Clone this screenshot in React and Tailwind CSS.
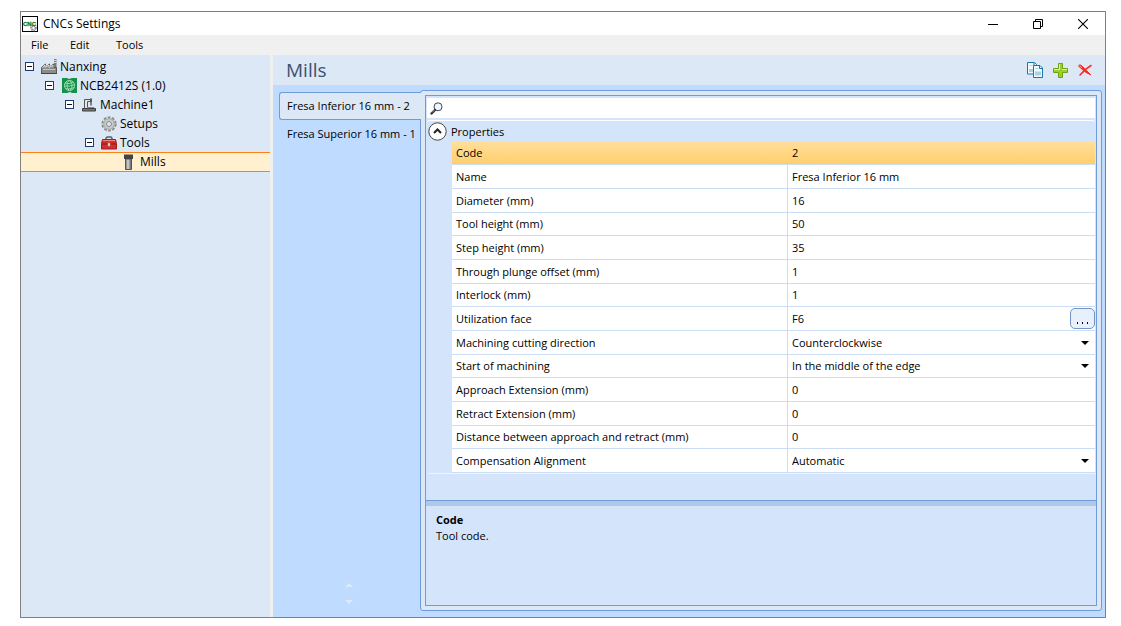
import React, { useState } from "react";

const mills = [
  { id: 2, label: "Fresa Inferior 16 mm - 2" },
  { id: 1, label: "Fresa Superior 16 mm - 1" },
];

const properties = [
  { name: "Code", value: "2", selected: true },
  { name: "Name", value: "Fresa Inferior 16 mm" },
  { name: "Diameter (mm)", value: "16" },
  { name: "Tool height (mm)", value: "50" },
  { name: "Step height (mm)", value: "35" },
  { name: "Through plunge offset (mm)", value: "1" },
  { name: "Interlock (mm)", value: "1" },
  { name: "Utilization face", value: "F6", type: "dialog" },
  { name: "Machining cutting direction", value: "Counterclockwise", type: "select", options: ["Counterclockwise", "Clockwise"] },
  { name: "Start of machining", value: "In the middle of the edge", type: "select", options: ["In the middle of the edge", "At the corner"] },
  { name: "Approach Extension (mm)", value: "0" },
  { name: "Retract Extension (mm)", value: "0" },
  { name: "Distance between approach and retract (mm)", value: "0" },
  { name: "Compensation Alignment", value: "Automatic", type: "select", options: ["Automatic", "Manual"] },
];

function AppIcon() {
  return (
    <svg width="16" height="16" viewBox="0 0 16 16" className="shrink-0">
      <rect x="0.5" y="0.5" width="15" height="15" fill="#fff" stroke="#000" />
      <circle cx="11.5" cy="12" r="2.2" fill="none" stroke="#8c8c8c" strokeWidth="2.2" strokeDasharray="1.3 .6" />
      <text x="1" y="10" fontSize="6" fontWeight="bold" fontFamily="Liberation Sans, sans-serif" fill="#0b7a1e" stroke="#0b7a1e" strokeWidth=".3">CNC</text>
    </svg>
  );
}

function FactoryIcon() {
  return (
    <svg width="16" height="16" viewBox="0 0 16 16" className="shrink-0">
      <path d="M13 0h2.5v9H13z" fill="#777" />
      <path d="M13 1.5h2.5M13 3.5h2.5" stroke="#ddd" />
      <path d="M.5 14.500V8.500L4.500 5v3L8.500 5v3L12.500 5v3.500h3v6z" fill="#8b8b89" stroke="#5c5b59" />
      <path d="M1.500 8.500L4 6v2.500L8 6v2.500L12 6v2.500" fill="none" stroke="#dedede" />
      <path d="M2 10.500h12" stroke="#c4c4c2" />
      <path d="M0 14.500h16" stroke="#464543" />
    </svg>
  );
}

function GlobeIcon() {
  return (
    <svg width="15" height="15" viewBox="0 0 15 15" className="shrink-0">
      <path d="M0 0h5l2 1 3-1h5v15h-5l-2-1-3 1H0z" fill="#13934a" />
      <g fill="none" stroke="#a5dfb5">
        <circle cx="7.500" cy="7.500" r="5" />
        <path d="M3 5Q7 7 11 4M2.500 8Q8 9 12.500 6.500M4 11Q8 11.500 12 9.500M7 2.500Q3 7 7 12.500M7.500 2.500Q12 6 8.500 12.500" strokeWidth=".9" />
      </g>
    </svg>
  );
}

function MachineIcon() {
  return (
    <svg width="14" height="14" viewBox="0 0 14 14" className="shrink-0">
      <path d="M2.500 10.500V1.500H9V3.500H5.500v7z" fill="#e4e4e4" stroke="#555" />
      <path d="M8 .5h2v4H8z" fill="#555" />
      <path d="M8.500 4.500h1v3h-1z" fill="#222" />
      <path d="M5 9.500h7" stroke="#888" />
      <path d="M.5 10.500h13v2.500H.5z" fill="#777" stroke="#3f3f3f" />
    </svg>
  );
}

function GearIcon() {
  return (
    <svg width="16" height="16" viewBox="0 0 16 16" className="shrink-0">
      <circle cx="8" cy="8" r="6.300" fill="none" stroke="#8a8a8a" strokeWidth="2.600" strokeDasharray="2.600 1.360" />
      <circle cx="8" cy="8" r="4.500" fill="none" stroke="#c9c9c9" strokeWidth="3" />
      <circle cx="8" cy="8" r="5.300" fill="none" stroke="#a0a0a0" strokeWidth=".8" />
      <circle cx="8" cy="8" r="2.500" fill="#dde8f5" stroke="#858585" />
    </svg>
  );
}

function ToolboxIcon() {
  return (
    <svg width="16" height="14" viewBox="0 0 16 14" className="shrink-0">
      <path d="M5 4V2.500Q5 1 6.500 1h3Q11 1 11 2.500V4" fill="none" stroke="#5b5b5b" strokeWidth="1.400" />
      <path d="M1.500 3.500h13l1 4v5.500H.5V7.500z" fill="#d62f2a" stroke="#a51b18" />
      <path d="M2 4.500h12" stroke="#f28a82" />
      <path d="M1 8h14" stroke="#8d1412" />
      <path d="M7 7h2v3H7z" fill="#eee" stroke="#999" strokeWidth=".6" />
    </svg>
  );
}

function MillIcon() {
  return (
    <svg width="10" height="16" viewBox="0 0 10 16" className="shrink-0">
      <defs>
        <linearGradient id="shank" x1="0" x2="1">
          <stop offset="0" stopColor="#666" />
          <stop offset=".4" stopColor="#d8d8d8" />
          <stop offset="1" stopColor="#555" />
        </linearGradient>
      </defs>
      <path d="M1.500 5h6v10.500h-6z" fill="url(#shank)" stroke="#555" />
      <path d="M0 .5h9v4.500H0z" fill="#444" />
    </svg>
  );
}

function CopyIcon() {
  return (
    <svg width="16" height="16" viewBox="0 0 16 16">
      <g fill="#f2fafd" stroke="#1877a8">
        <path d="M.5 .5h7l2 2v9.500H.5z" />
        <path d="M6.500 3.500h6.500l2.500 2.500v9.500h-9z" />
      </g>
      <path d="M2 7h4v3H2zM8 9.500h6v4H8z" fill="#a4d4e6" />
      <path d="M2.500 3.500h3M8.500 6.500h3" stroke="#a4d4e6" />
      <path d="M12.500 3.500v3h3M7 1v2.500" fill="none" stroke="#1877a8" />
    </svg>
  );
}

function AddIcon() {
  return (
    <svg width="15" height="15" viewBox="0 0 15 15">
      <path d="M5.500 .5h4v5h5v4h-5v5h-4v-5h-5v-4h5z" fill="#9bd02a" stroke="#6ea01a" />
      <path d="M6.500 1v5.500H1M9 6.500h5" fill="none" stroke="#e0f3a8" />
    </svg>
  );
}

function DeleteIcon() {
  return (
    <svg width="15" height="13" viewBox="0 0 15 13">
      <path d="M.5 2Q1.500 0 3.500 1.500Q8 6 13 11Q7 9 .5 2z" fill="#f5302b" stroke="#f5302b" strokeLinejoin="round" />
      <path d="M13 1.500Q7 5 2 11" fill="none" stroke="#f5302b" strokeWidth="1.600" strokeLinecap="round" />
      <path d="M1.500 1.500L4 4" stroke="#ff9d98" />
    </svg>
  );
}

function SearchIcon() {
  return (
    <svg width="13" height="13" viewBox="0 0 13 13" className="shrink-0">
      <circle cx="8" cy="4.800" r="4" fill="#f1f6fb" stroke="#3c4a5c" />
      <path d="M5 8L1.500 11.500" stroke="#303030" strokeWidth="2.400" strokeLinecap="round" />
      <path d="M4.500 8L2 10.500" stroke="#aaa" strokeWidth=".8" />
    </svg>
  );
}

function Expander() {
  return (
    <svg width="9" height="9" viewBox="0 0 9 9" className="shrink-0">
      <rect x="0.500" y="0.500" width="8" height="8" fill="#fff" stroke="#1f3a6e" />
      <path d="M2 4.500h5" stroke="#111" />
    </svg>
  );
}

const tree = [
  { label: "Nanxing", icon: FactoryIcon, indent: "pl-1", open: true },
  { label: "NCB2412S (1.0)", icon: GlobeIcon, indent: "pl-6", open: true },
  { label: "Machine1", icon: MachineIcon, indent: "pl-11", open: true },
  { label: "Setups", icon: GearIcon, indent: "pl-16" },
  { label: "Tools", icon: ToolboxIcon, indent: "pl-16", open: true },
  { label: "Mills", icon: MillIcon, indent: "pl-[84px]", selected: true },
];

function TreeRow({ node }) {
  const Icon = node.icon;
  return (
    <li className={node.selected ? "border-y border-[#ff7f11] bg-[#fff0d0]" : ""}>
      <button className={`flex w-full items-center text-left ${node.selected ? "h-[18px]" : "h-[19px]"} ${node.indent}`}>
        <span className="flex w-4 shrink-0">{node.open && <Expander />}</span>
        <span className="flex w-4 shrink-0 justify-center">
          <Icon />
        </span>
        <span className="pl-[3px] whitespace-nowrap">{node.label}</span>
      </button>
    </li>
  );
}

function PropertyEditor({ prop }) {
  if (prop.type === "select") {
    return (
      <div className="flex items-center">
        <select aria-label={prop.name} defaultValue={prop.value} className="min-w-0 flex-1 appearance-none bg-transparent pl-1 outline-none">
          {prop.options.map((option) => (
            <option key={option}>{option}</option>
          ))}
        </select>
        <svg width="8" height="4" viewBox="0 0 8 4" className="pointer-events-none mr-[6px] shrink-0">
          <path d="M0 0h8L4 4z" fill="#000" />
        </svg>
      </div>
    );
  }
  return (
    <div className="flex items-center">
      <input aria-label={prop.name} defaultValue={prop.value} className="min-w-0 flex-1 bg-transparent pl-1 outline-none" />
      {prop.type === "dialog" && (
        <button aria-label="Choose face" className="flex h-[21px] w-[25px] items-center justify-center gap-1 rounded-[5px] border border-[#7395c6] bg-[#e8f0fb] pt-2">
          <span className="h-[2px] w-px bg-black"></span>
          <span className="h-[2px] w-px bg-black"></span>
          <span className="h-[2px] w-px bg-black"></span>
        </button>
      )}
    </div>
  );
}

export default function App() {
  const [activeMill, setActiveMill] = useState(2);

  return (
    <div className="flex min-h-screen bg-white pt-[11px] pr-[15px] pb-2 pl-5 font-['Open_Sans','Noto_Sans',sans-serif] text-[12px] leading-4 text-black">
      <div className="flex min-w-0 flex-1 flex-col border border-[#808080]">
        {/* Title bar */}
        <header className="flex h-[23px] items-center pl-px">
          <AppIcon />
          <h1 className="flex-1 pl-[5px]">CNCs Settings</h1>
          <div className="flex items-center">
            <button aria-label="Minimize" className="flex w-[45px] justify-center">
              <svg width="10" height="10" viewBox="0 0 10 10"><path d="M0 5.500h10" stroke="#000" /></svg>
            </button>
            <button aria-label="Restore" className="flex w-[45px] justify-center">
              <svg width="10" height="10" viewBox="0 0 10 10" fill="none" stroke="#000">
                <path d="M.5 2.500h7v7h-7zM2.500 2.500v-2h7v7h-2" />
              </svg>
            </button>
            <button aria-label="Close" className="flex w-[45px] justify-center">
              <svg width="10" height="10" viewBox="0 0 10 10"><path d="M0 0l10 10M10 0L0 10" stroke="#000" strokeWidth="1.100" /></svg>
            </button>
          </div>
        </header>

        <nav className="flex h-5 items-center bg-[#f0f0f0] text-[11px]">
          <button className="w-[39px] pl-[10px] text-left">File</button>
          <button className="w-[46px] pl-[10px] text-left">Edit</button>
          <button className="pl-[10px] text-left">Tools</button>
        </nav>

        <div className="flex flex-1">
          {/* Machine tree */}
          <aside className="w-[249px] shrink-0 bg-[#dce8f6] pt-[2px]">
            <ul>
              {tree.map((node) => (
                <TreeRow key={node.label} node={node} />
              ))}
            </ul>
          </aside>
          <div className="w-[3px] shrink-0 bg-[#f0f0f0]"></div>

          <main className="flex min-w-0 flex-1 flex-col bg-[#bfdbff]">
            <div className="flex h-[30px] items-center bg-[#dce8f6] pr-3 pl-[13px]">
              <h2 className="flex-1 text-[19px] leading-6 text-[#3b526e]">Mills</h2>
              <div className="flex items-center gap-[10px]">
                <button aria-label="Copy"><CopyIcon /></button>
                <button aria-label="Add"><AddIcon /></button>
                <button aria-label="Delete"><DeleteIcon /></button>
              </div>
            </div>

            <div className="flex flex-1 pt-[5px] pr-[3px] pb-[6px] pl-[6px] text-[11px]">
              {/* Tool tabs */}
              <div className="z-10 -mr-px flex w-[142px] shrink-0 flex-col pt-[2px]">
                {mills.map((mill) => (
                  <button
                    key={mill.id}
                    onClick={() => setActiveMill(mill.id)}
                    className={`h-7 rounded-l-[3px] border border-r-0 pl-[7px] text-left whitespace-nowrap ${
                      activeMill === mill.id ? "border-[#6f9bd8] bg-[#dce8f6]" : "mr-px border-transparent"
                    }`}
                  >
                    {mill.label}
                  </button>
                ))}
                <div className="mt-auto flex flex-col items-center gap-[13px] pr-[2px] pb-[7px]">
                  <button aria-label="Scroll up">
                    <svg width="8" height="4" viewBox="0 0 8 4"><path d="M0 4h8L4 0z" fill="#dfeaf9" /></svg>
                  </button>
                  <button aria-label="Scroll down">
                    <svg width="8" height="4" viewBox="0 0 8 4"><path d="M0 0h8L4 4z" fill="#dfeaf9" /></svg>
                  </button>
                </div>
              </div>

              <div className="flex min-w-0 flex-1 rounded-[3px] border border-[#6f9bd8] bg-[#dce8f6] p-1">
                <div className="flex min-w-0 flex-1 flex-col border border-[#6f9bd8] bg-[#d4e5fb]">
                  <div className="flex-1 px-px pt-[2px] pb-5">
                    <label className="flex h-5 items-center bg-white pl-[3px]">
                      <SearchIcon />
                      <input aria-label="Search properties" className="min-w-0 flex-1 bg-transparent pl-1 outline-none" />
                    </label>

                    {/* Property group */}
                    <section className="mt-[2px] rounded-[3px] border-t border-white">
                      <div className="flex h-[21px] items-center">
                        <button aria-label="Collapse Properties" className="-my-1 ml-px">
                          <svg width="19" height="19" viewBox="0 0 19 19">
                            <circle cx="9.500" cy="9.500" r="8.700" fill="#fff" stroke="#444" />
                            <path d="M6 11l3.500-3.500L13 11" fill="none" stroke="#222" strokeWidth="2" />
                          </svg>
                        </button>
                        <h3 className="pl-1">Properties</h3>
                      </div>
                      <div className="rounded-bl-[3px] border-b border-[#eef5fd] pl-[25px]">
                        <table className="w-full table-fixed border-separate border-spacing-0">
                          <tbody>
                            {properties.map((prop) => (
                              <tr
                                key={prop.name}
                                className={`h-6 nth-[3n+1]:h-[23px] ${
                                  prop.selected ? "bg-linear-to-b from-[#ffdf9b] to-[#ffce69]" : "bg-white"
                                }`}
                              >
                                <th
                                  scope="row"
                                  className={`w-[336px] border-b border-[#cbdef5] p-0 pl-1 text-left font-normal whitespace-nowrap ${
                                    prop.selected ? "" : "border-r"
                                  }`}
                                >
                                  {prop.name}
                                </th>
                                <td className="border-b border-[#cbdef5] p-0">
                                  <PropertyEditor prop={prop} />
                                </td>
                              </tr>
                            ))}
                          </tbody>
                        </table>
                      </div>
                    </section>
                  </div>

                  {/* Description of the selected property */}
                  <div className="h-[105px] border-t border-[#6f9bd8]">
                    <div className="h-[5px] bg-[#b0c8e8]"></div>
                    <div className="px-[10px] pt-[6px]">
                      <p className="font-bold">Code</p>
                      <p>Tool code.</p>
                    </div>
                  </div>
                </div>
              </div>
            </div>
          </main>
        </div>
      </div>
    </div>
  );
}
